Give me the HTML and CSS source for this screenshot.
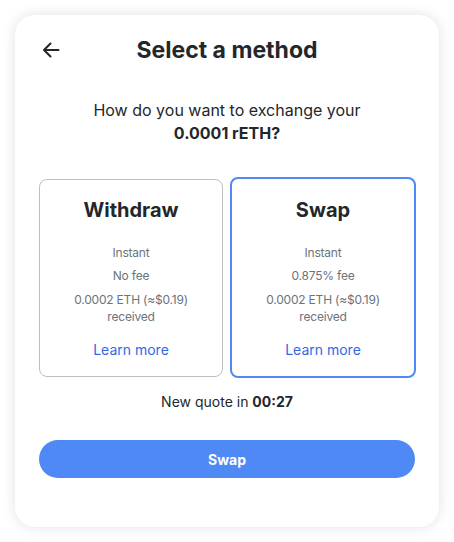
FILE: index.html
```html
<!DOCTYPE html>
<html>
<head>
<meta charset="utf-8">
<link rel="stylesheet" href="styles.css">
</head>
<body>
<div class="modal">
  <div class="header">
    <button class="back" aria-label="Back">
      <svg width="18" height="16" viewBox="0 0 18 16"><path d="M16.5 8H2M8.5 1.5L2 8l6.5 6.5" fill="none" stroke="#24272a" stroke-width="2" stroke-linecap="round" stroke-linejoin="round"/></svg>
    </button>
    <h1 class="title">Select a method</h1>
  </div>
  <p class="question">How do you want to exchange your<br><strong>0.0001 rETH?</strong></p>
  <div class="options">
    <div class="option">
      <h2 class="option-title">Withdraw</h2>
      <p class="detail">Instant</p>
      <p class="detail">No fee</p>
      <p class="detail">0.0002 ETH (≈$0.19)<br>received</p>
      <a class="learn">Learn more</a>
    </div>
    <div class="option selected">
      <h2 class="option-title">Swap</h2>
      <p class="detail">Instant</p>
      <p class="detail">0.875% fee</p>
      <p class="detail">0.0002 ETH (≈$0.19)<br>received</p>
      <a class="learn">Learn more</a>
    </div>
  </div>
  <p class="quote">New quote in <strong>00:27</strong></p>
  <button class="primary">Swap</button>
</div>
</body>
</html>
```
FILE: styles.css
```css
* { box-sizing: border-box; }
html, body { margin: 0; background: #ffffff; }
body {
  padding: 15px;
  font-family: Inter, "Noto Sans", sans-serif;
  color: #24272a;
}
.modal {
  width: 424px;
  height: 512px;
  background: #fff;
  border-radius: 20px;
  box-shadow: 0 0 14px rgba(0, 0, 0, 0.12);
  padding: 20px 24px 0;
  display: flex;
  flex-direction: column;
}
.header {
  position: relative;
  display: flex;
  justify-content: center;
  align-items: center;
  height: 30px;
}
.back {
  position: absolute;
  left: 3px;
  top: 7px;
  border: 0;
  background: none;
  padding: 0;
  width: 18px;
  height: 16px;
  display: flex;
}
.title {
  margin: 0;
  font-size: 23px;
  font-weight: 700;
  line-height: 30px;
}
.question {
  margin: 34px 0 0;
  text-align: center;
  font-size: 16px;
  line-height: 23px;
}
.question strong { font-weight: 700; }
.options {
  margin-top: 34px;
  display: grid;
  grid-template-columns: 1fr 1fr;
  gap: 8px;
}
.option {
  border: 1px solid #bbc0c5;
  border-radius: 8px;
  height: 198px;
  display: flex;
  flex-direction: column;
  align-items: center;
  padding-top: 16px;
}
.option.selected {
  border: 2px solid #4f89f5;
  margin: -2px -1px -1px -1px;
  height: 201px;
  padding-top: 17px;
}
.option-title {
  margin: 0 0 21px;
  font-size: 20px;
  font-weight: 700;
  line-height: 28px;
}
.detail {
  margin: 0 0 7px;
  font-size: 12px;
  line-height: 16px;
  color: #6a737d;
  text-align: center;
  letter-spacing: -0.2px;
}
.detail:nth-of-type(3) { line-height: 17px; }
.learn {
  margin-top: 8px;
  font-size: 14px;
  line-height: 20px;
  color: #3368e6;
  cursor: pointer;
}
.quote {
  margin: 15px 0 0;
  text-align: center;
  font-size: 14px;
  line-height: 20px;
}
.quote strong { font-weight: 700; }
.primary {
  margin-top: 28px;
  height: 38px;
  border: 0;
  border-radius: 19px;
  background: #4f89f5;
  color: #fff;
  font-family: inherit;
  font-size: 14px;
  font-weight: 700;
}
```
